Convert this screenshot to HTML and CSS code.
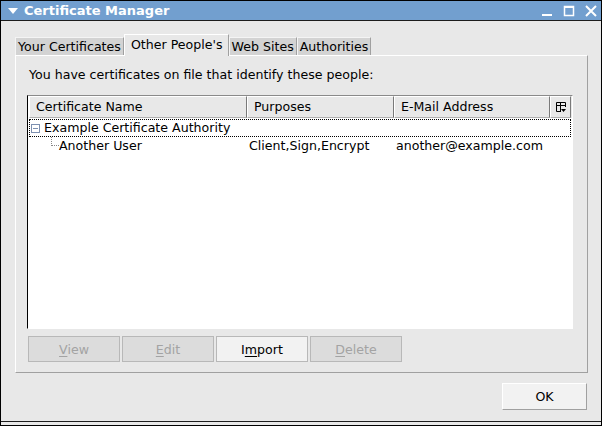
FILE: index.html
```html
<!DOCTYPE html>
<html lang="en">
<head>
    <meta charset="UTF-8">
    <title>Certificate Manager</title>
    <link rel="stylesheet" href="styles.css">
</head>
<body>
    <div class="window">
        <div class="titlebar">
            <svg class="menu-arrow" width="12" height="8" viewBox="0 0 12 8"><polygon points="1,1 11,1 6,7" fill="#fff"/></svg>
            <span class="title">Certificate Manager</span>
            <div class="wm-buttons">
                <svg width="12" height="12" viewBox="0 0 12 12"><rect x="1" y="9" width="10" height="2" fill="#fff"/></svg>
                <svg width="12" height="12" viewBox="0 0 12 12"><rect x="1.5" y="1.5" width="9" height="9" fill="none" stroke="#fff" stroke-width="1.5"/><rect x="1" y="1" width="10" height="2" fill="#fff"/></svg>
                <svg width="12" height="12" viewBox="0 0 12 12"><path d="M1 1 L11 11 M11 1 L1 11" stroke="#fff" stroke-width="2"/></svg>
            </div>
        </div>

        <div class="client">
            <div class="notebook">
                <div class="tabs">
                    <div class="tab">Your Certificates</div>
                    <div class="tab active">Other People's</div>
                    <div class="tab">Web Sites</div>
                    <div class="tab">Authorities</div>
                </div>
                <div class="panel">
                    <div class="intro">You have certificates on file that identify these people:</div>
                    <div class="tree">
                        <div class="tree-header">
                            <div class="col col-name">Certificate Name</div>
                            <div class="col col-purpose">Purposes</div>
                            <div class="col col-email">E-Mail Address</div>
                            <div class="col col-picker">
                                <svg width="11" height="11" viewBox="0 0 11 11"><path d="M0.5 0.5 H9.5 V5 M0.5 0.5 V9.5 H5 M0.5 3.5 H9.5 M4.5 0.5 V9.5" fill="none" stroke="#000"/><polygon points="5,7 10,7 7.5,10" fill="#000"/></svg>
                            </div>
                        </div>
                        <div class="tree-body">
                            <div class="row parent focused">
                                <span class="twisty"></span>
                                <span class="cell cell-name">Example Certificate Authority</span>
                            </div>
                            <div class="row child">
                                <span class="cell cell-name"><span class="branch"></span>Another User</span>
                                <span class="cell cell-purpose">Client,Sign,Encrypt</span>
                                <span class="cell cell-email">another@example.com</span>
                            </div>
                        </div>
                    </div>
                    <div class="actions">
                        <button class="btn" disabled><u>V</u>iew</button>
                        <button class="btn" disabled><u>E</u>dit</button>
                        <button class="btn">I<u>m</u>port</button>
                        <button class="btn" disabled><u>D</u>elete</button>
                    </div>
                </div>
            </div>
            <div class="footer">
                <button class="btn ok-btn">OK</button>
            </div>
        </div>
    </div>
</body>
</html>
```

FILE: styles.css
```css
:root {
    --bg: #e8e8e8;
    --title-bg: #729fcf;
    --shade: #a0a0a0;
    --disabled-text: #a3a3a3;
}

* {
    margin: 0;
    padding: 0;
    box-sizing: border-box;
}

body {
    font-family: "DejaVu Sans", sans-serif;
    font-size: 12.6px;
    color: #000;
    background: var(--bg);
}

.window {
    width: 602px;
    height: 426px;
    border: 1px solid #000;
    display: flex;
    flex-direction: column;
    background: var(--bg);
    padding-bottom: 3px;
}

.titlebar {
    height: 20px;
    background: var(--title-bg);
    border-bottom: 1px solid #1c1c1c;
    display: flex;
    align-items: center;
    padding-left: 6px;
    color: #fff;
}

.menu-arrow {
    margin-right: 5px;
}

.title {
    font-weight: bold;
    font-size: 13px;
}

.wm-buttons {
    margin-left: auto;
    display: flex;
    gap: 10px;
    padding-right: 4px;
}

.client {
    flex: 1;
    padding: 13px 13px 0 14px;
    border-bottom: 1px solid #1c1c1c;
    display: flex;
    flex-direction: column;
}

.tabs {
    display: flex;
    align-items: flex-end;
    height: 21px;
}

.tab {
    height: 18px;
    line-height: 17px;
    padding: 0 2px;
    background: #d3d3d3;
    border-top: 1px solid #f4f4f4;
    border-left: 1px solid #f4f4f4;
    border-right: 1px solid var(--shade);
}

.tab.active {
    line-height: 19px;
    padding: 0 5px 0 6px;
    background: var(--bg);
    border-top: 1px solid #fff;
    border-left: 1px solid #fff;
    position: relative;
    margin-bottom: -1px;
    height: 22px;
    z-index: 1;
}

.panel {
    height: 318px;
    border-top: 1px solid #fff;
    border-left: 1px solid #fff;
    border-right: 1px solid var(--shade);
    border-bottom: 1px solid var(--shade);
    padding: 10px 14px 10px 11px;
    display: flex;
    flex-direction: column;
}

.intro {
    padding-left: 2px;
    height: 29px;
    line-height: 17px;
}

.tree {
    height: 234px;
    border-top: 1px solid #8a8a8a;
    border-left: 1px solid #000;
    border-right: 1px solid #fff;
    border-bottom: 1px solid #fff;
    background: #fff;
    padding: 0 0 0 1px;
}

.tree-header {
    display: flex;
    height: 23px;
    background: var(--bg);
    border-bottom: 1px solid #fff;
}

.col {
    border-top: 1px solid #fff;
    border-left: 1px solid #fff;
    border-right: 1px solid #7a7a7a;
    border-bottom: 1px solid #b0b0b0;
    padding-left: 6px;
    line-height: 20px;
}

.col-name { width: 218px; }
.col-purpose { width: 147px; }
.col-email { width: 156px; }

.col-picker {
    width: 21px;
    padding-left: 5px;
    display: flex;
    align-items: center;
}

.row {
    display: flex;
    height: 18px;
    line-height: 16px;
    align-items: center;
}

.row.focused {
    border: 1px dotted #000;
    margin-right: 1px;
}

.twisty {
    width: 9px;
    height: 9px;
    margin: 0 2px 0 1px;
    border: 1px solid #7c8fb0;
    background: linear-gradient(#7c8fb0, #7c8fb0) center / 5px 1px no-repeat, #fff;
}

.cell {
    padding-left: 2px;
    white-space: nowrap;
}

.child .cell-name {
    width: 218px;
    padding-left: 22px;
    display: flex;
    align-items: center;
}

.branch {
    width: 8px;
    height: 9px;
    margin-top: -9px;
    border-left: 1px dotted #888;
    border-bottom: 1px dotted #888;
}

.child .cell-purpose { width: 147px; }

.actions {
    margin-top: auto;
    display: flex;
    gap: 2px;
    padding-left: 1px;
}

.btn {
    width: 92px;
    height: 26px;
    font-family: inherit;
    font-size: 12.6px;
    color: #000;
    background: #f2f2f2;
    border: 1px solid var(--shade);
    border-top-color: #fff;
    border-left-color: #fff;
    outline: 1px solid #b8b8b8;
    outline-offset: -1px;
}

.btn:disabled {
    background: #dcdcdc;
    color: var(--disabled-text);
}

.btn u {
    text-decoration-thickness: 1px;
    text-underline-offset: 2px;
}

.footer {
    display: flex;
    justify-content: flex-end;
    padding: 10px 1px 0 0;
}

.ok-btn {
    width: 85px;
    height: 27px;
    outline: none;
    border: 1px solid var(--shade);
    border-top-color: #fff;
    border-left-color: #fff;
}
```
